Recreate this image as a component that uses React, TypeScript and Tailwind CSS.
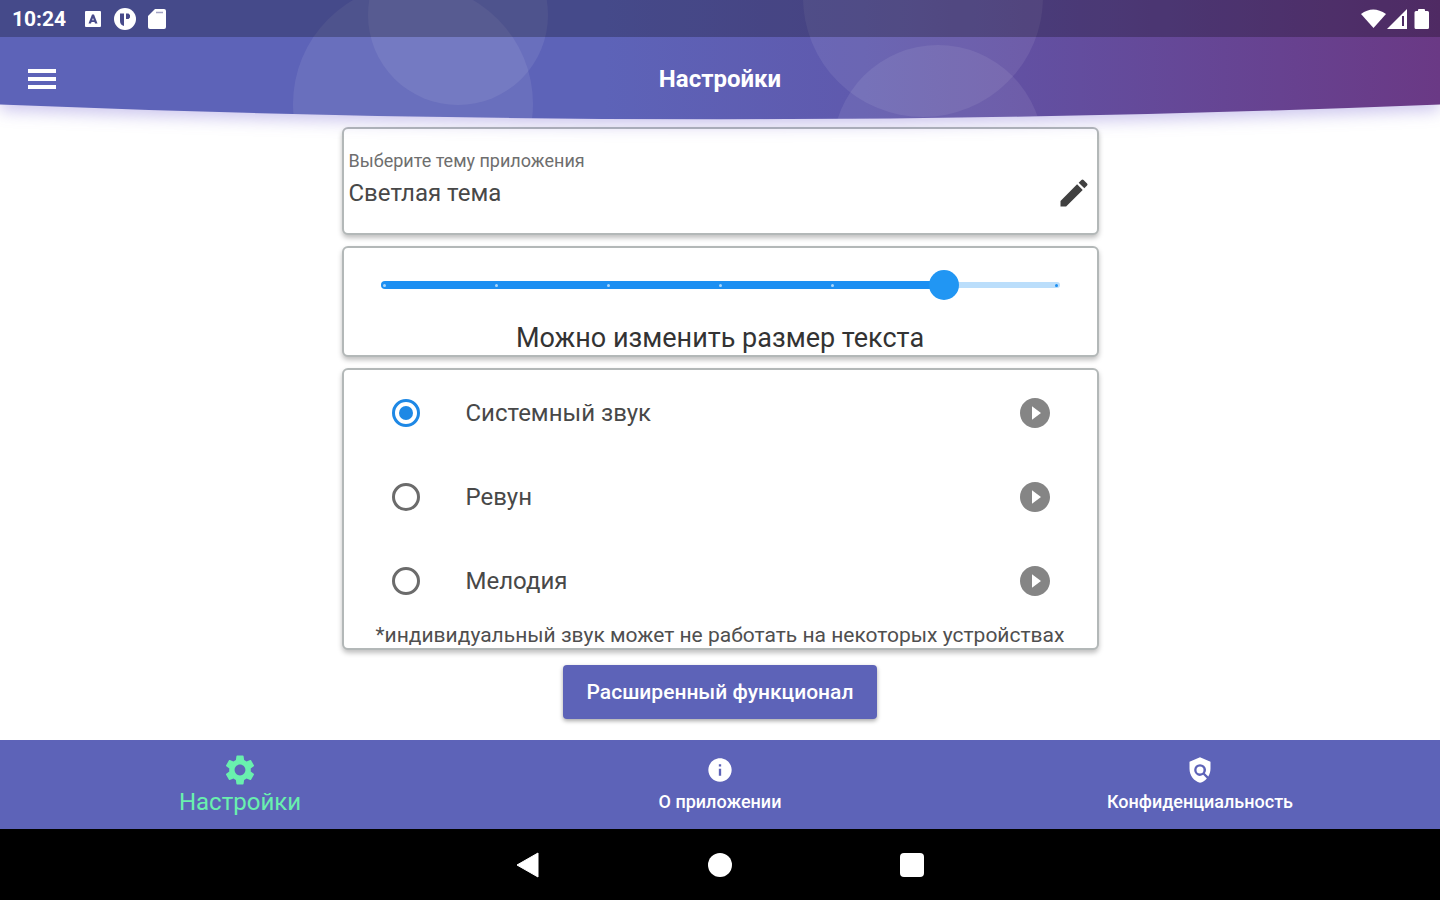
import React, { useState } from 'react';
import { MdEdit, MdInfo, MdPlayCircleFilled, MdPolicy, MdSettings } from 'react-icons/md';

const sounds = [
  { id: "system", title: "Системный звук" },
  { id: "revun", title: "Ревун" },
  { id: "melody", title: "Мелодия" }
];

const tabs = [
  { id: "settings", title: "Настройки", icon: MdSettings },
  { id: "about", title: "О приложении", icon: MdInfo },
  { id: "privacy", title: "Конфиденциальность", icon: MdPolicy }
];

const TEXT_SIZE_STEPS = 6;

const Card = ({ className = "", children }: { className?: string; children: React.ReactNode }) => (
  <section className={`rounded-md border-2 border-[#b3b8b8] bg-white shadow-[0_3px_5px_rgba(0,0,0,0.25)] ${className}`}>
    {children}
  </section>
);

const HeaderBackground = () => (
  <svg
    className="absolute inset-0 h-full w-full overflow-visible drop-shadow-[0_6px_8px_rgba(90,70,200,0.3)]"
    viewBox="0 0 1440 120"
    preserveAspectRatio="none"
    aria-hidden="true"
  >
    <defs>
      <linearGradient id="headerFill" x1="0" y1="0" x2="1" y2="0">
        <stop offset="0.42" stopColor="#5d63b8" />
        <stop offset="0.6" stopColor="#5f59ad" />
        <stop offset="1" stopColor="#6a3985" />
      </linearGradient>
      <clipPath id="headerShape">
        <path d="M0 0H1440V104.500Q720 134 0 104.500Z" />
      </clipPath>
    </defs>
    <g clipPath="url(#headerShape)">
      <rect width="1440" height="120" fill="url(#headerFill)" />
      <g fill="#fff" fillOpacity="0.08">
        <circle cx="413" cy="104" r="120" />
        <circle cx="458" cy="15" r="90" />
        <circle cx="923" cy="-3" r="120" />
        <circle cx="938" cy="150" r="105" />
      </g>
    </g>
  </svg>
);

const StatusBar = () => (
  <div className="relative flex h-[37px] items-center justify-between bg-black/25 pr-2 pl-3 text-white">
    <div className="flex items-center">
      <span className="w-[72px] text-[21px] leading-6 font-bold">10:24</span>
      <svg className="mr-3 h-[18px] w-[18px]" viewBox="0 0 18 18" aria-hidden="true">
        <rect x="1" y="1" width="16" height="16" rx="1" fill="#fff" />
        <path fill="#474a8a" fillRule="evenodd" d="M8 4.500h2l3.500 9H11l-.5-1.500h-3L7 13.500H4.500zM9 8l-.8 2.200h1.600z" />
      </svg>
      <svg className="mr-3 h-[22px] w-[22px]" viewBox="0 0 22 22" aria-hidden="true">
        <circle cx="11" cy="11" r="11" fill="#fff" />
        <path fill="#474a8a" d="M6 5.500h4v12.500Q6 17 6 13zM12 5.500h2.500l1.500 1.500v2.500l-1.500 1.500H12z" />
      </svg>
      <svg className="h-5 w-[18px]" viewBox="0 0 18 20" aria-hidden="true">
        <path fill="#fff" d="M7 0h9q2 0 2 2v16q0 2-2 2H2q-2 0-2-2V7z" />
        <path stroke="#474a8a" strokeOpacity="0.5" strokeWidth="1.500" d="M8 3.500h7" />
      </svg>
    </div>
    <svg className="h-[22px] w-[72px]" viewBox="0 0 72 22" aria-hidden="true">
      <path fill="#fff" d="M1 6Q13 -3 26 6L13.500 20z" />
      <path fill="#fff" fillRule="evenodd" d="M47 1v20H27zM42 8v10h2V8z" />
      <path fill="#fff" d="M59 1h5q1 0 1 1v1h2.500q1.500 0 1.500 1.500v15q0 1.500-1.500 1.500H56q-1.500 0-1.500-1.500v-15Q54.500 3 56 3h2V2q0-1 1-1z" />
    </svg>
  </div>
);

const Header = () => (
  <header className="relative z-10">
    <HeaderBackground />
    <StatusBar />
    <div className="relative grid h-[83px] grid-cols-[1fr_auto_1fr] items-center px-7 text-white">
      <button type="button" aria-label="Меню" className="justify-self-start">
        <svg className="h-5 w-7" viewBox="0 0 28 20" fill="currentColor" aria-hidden="true">
          <path d="M0 0h28v4H0zM0 8h28v4H0zM0 16h28v4H0z" />
        </svg>
      </button>
      <h1 className="text-2xl font-bold">Настройки</h1>
    </div>
  </header>
);

const TextSizeSlider = () => {
  const [size, setSize] = useState(5);

  return (
    <div className="mx-[25px] grid items-center">
      <div className="col-start-1 row-start-1 mx-3 h-[6px] rounded-full bg-[#bbdefb]" />
      <div className="col-start-1 row-start-1 mx-[15px]">
        <div
          className="relative h-2 rounded-full bg-[#1c8ff2] before:absolute before:inset-y-0 before:-left-[3px] before:w-2 before:rounded-l-full before:bg-[#1c8ff2]"
          style={{ width: `${(size / TEXT_SIZE_STEPS) * 100}%` }}
        />
      </div>
      <div className="relative col-start-1 row-start-1 mx-[14px] flex justify-between">
        {Array.from({ length: TEXT_SIZE_STEPS + 1 }, (_, i) => (
          <span key={i} className={`h-[3px] w-[3px] rounded-full ${i > size ? "bg-[#1c8ff2]" : "bg-[#a9d6fb]"}`} />
        ))}
      </div>
      <input
        id="textSize"
        type="range"
        min={0}
        max={TEXT_SIZE_STEPS}
        value={size}
        onChange={e => setSize(Number(e.target.value))}
        className="relative col-start-1 row-start-1 h-[30px] w-full appearance-none bg-transparent [&::-webkit-slider-thumb]:h-[30px] [&::-webkit-slider-thumb]:w-[30px] [&::-webkit-slider-thumb]:appearance-none [&::-webkit-slider-thumb]:rounded-full [&::-webkit-slider-thumb]:bg-[#2196f3]"
      />
    </div>
  );
};

const SoundList = () => {
  const [selected, setSelected] = useState("system");

  return (
    <ul>
      {sounds.map(sound => (
        <li key={sound.id} className="flex h-[84px] items-center justify-between pr-11 pl-12">
          <label className="flex items-center gap-[46px] text-2xl text-[#484848]">
            <input
              type="radio"
              name="sound"
              checked={selected === sound.id}
              onChange={() => setSelected(sound.id)}
              className="grid h-7 w-7 appearance-none place-items-center rounded-full border-3 border-[#6b6b6b] before:h-[14px] before:w-[14px] before:rounded-full checked:border-[#1e88e5] checked:before:bg-[#1e88e5]"
            />
            {sound.title}
          </label>
          <button type="button" aria-label={`Прослушать: ${sound.title}`} className="text-[#858585]">
            <MdPlayCircleFilled size={36} />
          </button>
        </li>
      ))}
    </ul>
  );
};

const BottomTabs = () => (
  <nav className="grid h-[89px] grid-cols-3 bg-[#5d63b8]">
    {tabs.map(({ id, title, icon: Icon }) => {
      const active = id === "settings";
      return (
        <a
          key={id}
          href={`#${id}`}
          className={`flex flex-col items-center pt-3 ${active ? "text-2xl text-[#69f0ae]" : "text-lg font-medium text-white"}`}
        >
          <span className="flex h-9 items-center">
            <Icon size={active ? 36 : 28} />
          </span>
          <span className="leading-7">{title}</span>
        </a>
      );
    })}
  </nav>
);

const SystemNav = () => (
  <div className="flex h-[71px] items-center justify-center bg-black text-white">
    <button type="button" aria-label="Назад" className="flex w-48 justify-center">
      <svg className="h-[26px] w-6" viewBox="0 0 24 26" fill="currentColor"><path d="M22 1v24L1 13z" stroke="currentColor" strokeLinejoin="round" /></svg>
    </button>
    <button type="button" aria-label="Домой" className="flex w-48 justify-center">
      <span className="h-6 w-6 rounded-full bg-white" />
    </button>
    <button type="button" aria-label="Недавние" className="flex w-48 justify-center">
      <span className="h-6 w-6 rounded-sm bg-white" />
    </button>
  </div>
);

const App = () => {
  return (
    <div className="flex min-h-screen flex-col bg-white font-[Roboto,sans-serif]">
      <Header />
      <main className="mx-auto flex w-full max-w-[757px] flex-1 flex-col gap-[11px] pt-[7px] pb-5">
        <Card className="px-[5px] py-5">
          <p className="text-lg leading-6 text-[#6e6e6e]">Выберите тему приложения</p>
          <div className="flex h-10 items-center justify-between">
            <p className="text-2xl text-[#484848]">Светлая тема</p>
            <button type="button" aria-label="Изменить тему" className="text-[#404040]">
              <MdEdit size={36} />
            </button>
          </div>
        </Card>

        <Card className="flex flex-col gap-[22px] pt-[22px] pb-px">
          <TextSizeSlider />
          <label htmlFor="textSize" className="text-center text-[27px] leading-8 text-[#333333]">
            Можно изменить размер текста
          </label>
        </Card>

        <Card className="py-px">
          <SoundList />
          <p className="text-center text-[21px] leading-6 text-[#4f4f4f]">
            *индивидуальный звук может не работать на некоторых устройствах
          </p>
        </Card>

        <button
          type="button"
          className="mt-1 self-center rounded-sm bg-[#5d63b8] px-6 py-3 text-[21px] leading-[30px] font-medium text-white shadow-[0_2px_4px_rgba(0,0,0,0.35)]"
        >
          Расширенный функционал
        </button>
      </main>
      <BottomTabs />
      <SystemNav />
    </div>
  );
};

export default App;
